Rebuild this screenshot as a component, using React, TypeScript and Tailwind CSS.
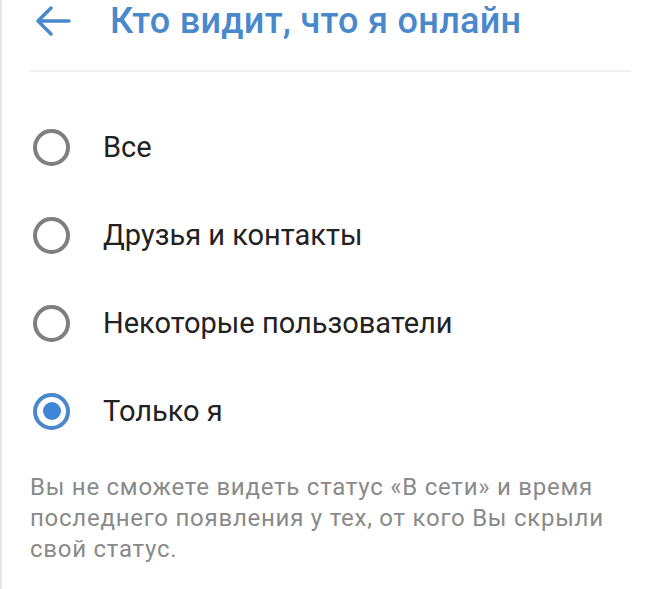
import { useState } from "react";

const options = ["Все", "Друзья и контакты", "Некоторые пользователи", "Только я"];

export default function App() {
  const [selected, setSelected] = useState(3);

  return (
    <div
      className="w-[659px] h-[589px] bg-white border-l-2 border-[#e6e6e6] overflow-hidden"
      style={{ fontFamily: "Roboto, 'Noto Sans', sans-serif" }}
    >
      <div className="flex items-center h-[42px] pl-[33px]">
        <svg width="36" height="32" viewBox="0 0 36 32" fill="none" className="shrink-0">
          <path
            d="M34 16H4M16 3L3 16L16 29"
            stroke="#4a88cc"
            strokeWidth="3.5"
            strokeLinecap="round"
            strokeLinejoin="round"
          />
        </svg>
        <h1 className="ml-[39px] text-[36px] font-medium text-[#4a88cc] leading-none tracking-[0.3px]">
          Кто видит, что я онлайн
        </h1>
      </div>
      <div className="mt-[28px] mx-[28px] h-[2px] bg-[#f0f0f0]" />

      <div className="flex flex-col pt-[31px]">
        {options.map((label, i) => (
          <div
            key={label}
            className="flex items-center h-[88px] pl-[31px] cursor-pointer"
            onClick={() => setSelected(i)}
          >
            <div
              className={`w-[37px] h-[37px] rounded-full border-[4px] flex items-center justify-center shrink-0 ${
                selected === i ? "border-[#4a88cc]" : "border-[#7f7f7f]"
              }`}
            >
              {selected === i && <div className="w-[18px] h-[18px] rounded-full bg-[#3f86d8]" />}
            </div>
            <span className="ml-[33px] text-[29px] text-[#222222] leading-none">{label}</span>
          </div>
        ))}
      </div>

      <p className="mt-[17px] pl-[28px] pr-[20px] text-[24px] leading-[31px] text-[#8a8a8a] tracking-[0.75px]">
        Вы не сможете видеть статус «В сети» и время последнего появления у тех, от кого Вы скрыли
        свой статус.
      </p>
    </div>
  );
}
